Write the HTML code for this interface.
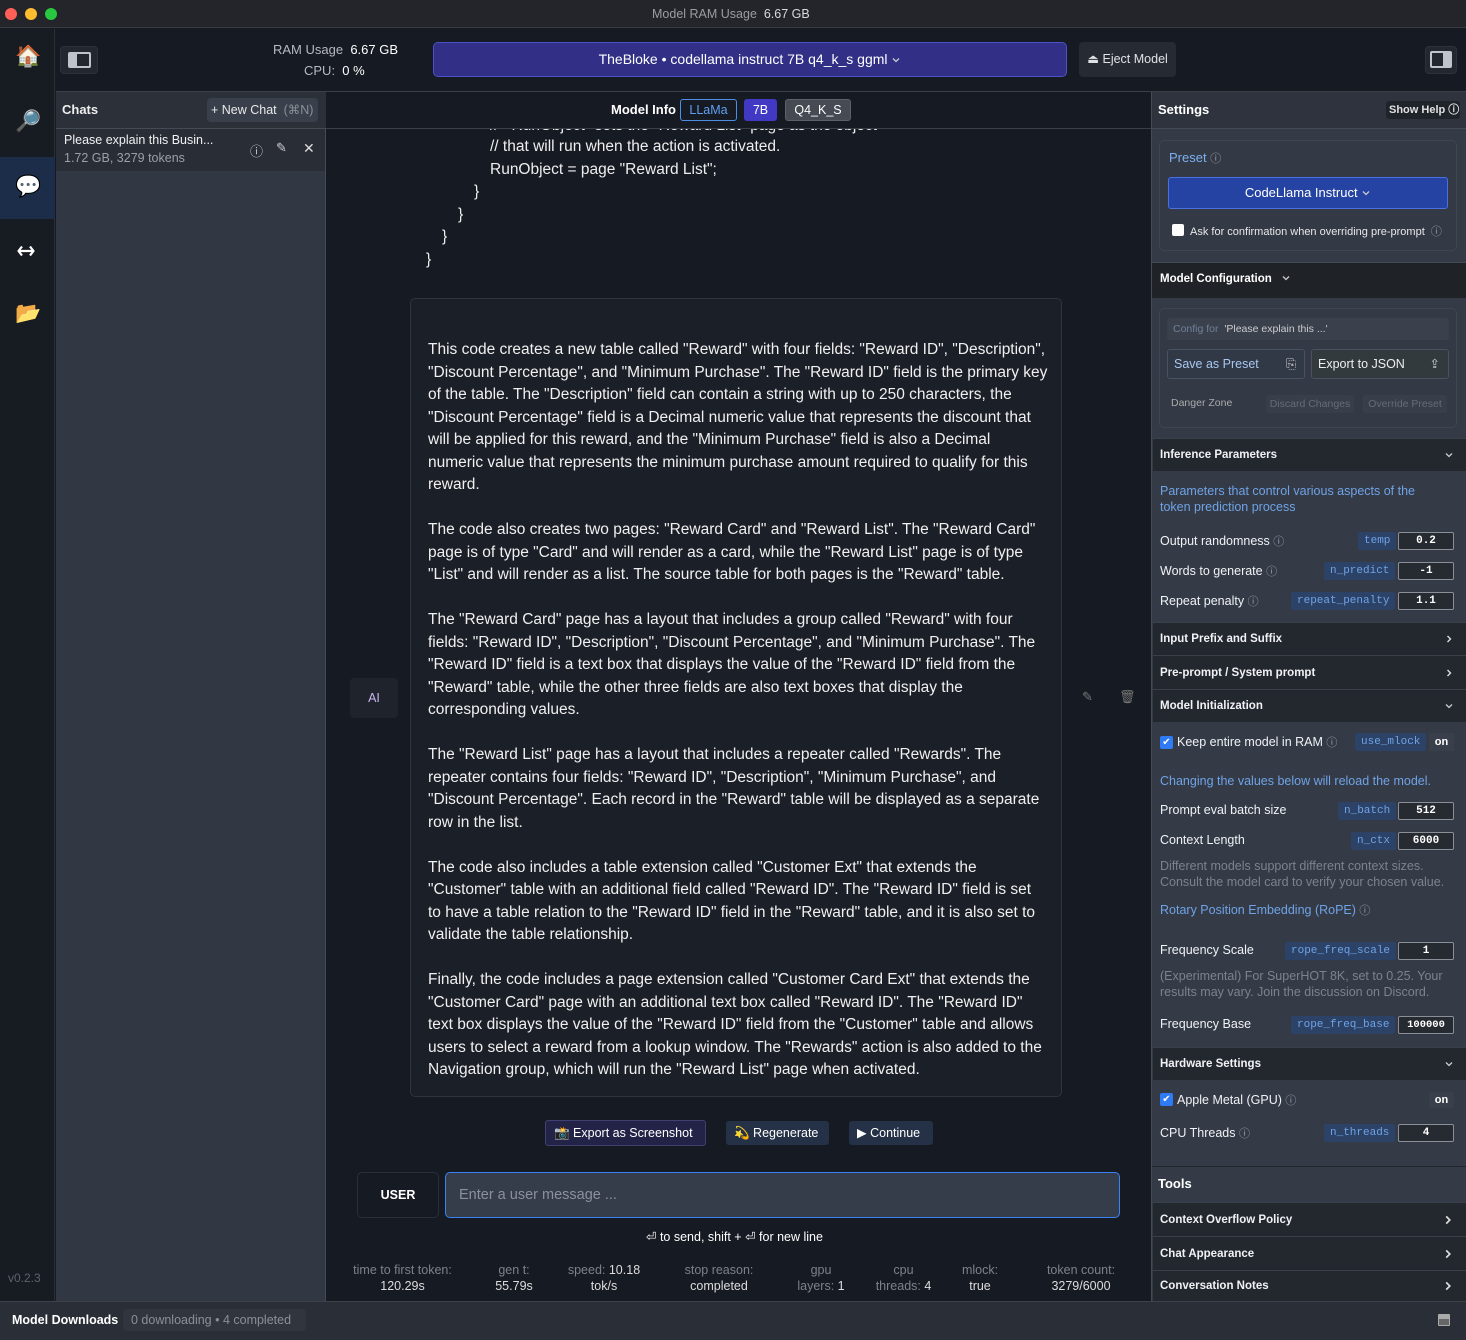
<!DOCTYPE html>
<html><head><meta charset="utf-8"><style>
*{box-sizing:border-box;margin:0;padding:0}
body{width:1466px;height:1340px;background:#161a22;font-family:"Liberation Sans",sans-serif;color:#e6e8ec;position:relative;overflow:hidden;font-size:13px}
.a{position:absolute}
.nw{white-space:nowrap}
.tag{position:absolute;background:#2c4266;color:#6fa3e6;font-family:"Liberation Mono",monospace;font-size:11px;height:18px;line-height:18px;padding:0 6px;border-radius:2px}
.val{position:absolute;border:1px solid #8a8f98;background:#262a31;color:#fff;font-family:"Liberation Mono",monospace;font-size:11px;height:18px;line-height:16px;text-align:center;width:56px;left:1398px;border-radius:2px;font-weight:bold}
.lbl{position:absolute;left:1160px;font-size:12.5px;color:#f0f2f5}
.sec{position:absolute;left:1153px;width:313px;background:#23272e;font-size:11.5px;font-weight:bold;color:#f0f2f5;padding-left:7px;border-top:1px solid #3a404a}
.chev{position:absolute;right:12px;top:50%;margin-top:-5px;width:10px;height:10px}
.info{color:#9aa0aa;font-size:11px}
.msg div{height:22.5px;white-space:nowrap}
</style></head><body>
<svg width="0" height="0" style="position:absolute"><defs>
<symbol id="cd" viewBox="0 0 10 10"><path d="M2 3.5 L5 6.5 L8 3.5" fill="none" stroke="#ccc" stroke-width="1.3"/></symbol>
<symbol id="cr" viewBox="0 0 10 10"><path d="M3.5 2 L6.5 5 L3.5 8" fill="none" stroke="#ddd" stroke-width="1.4"/></symbol>
</defs></svg>
<div class="a" style="left:0;top:0;width:1466px;height:28px;background:#23252a;border-bottom:1px solid #3a3c42"></div>
<div class="a" style="left:5px;top:8px;width:12px;height:12px;border-radius:50%;background:#fe5f57"></div>
<div class="a" style="left:25px;top:8px;width:12px;height:12px;border-radius:50%;background:#febc2e"></div>
<div class="a" style="left:45px;top:8px;width:12px;height:12px;border-radius:50%;background:#28c840"></div>
<div class="a nw" style="left:652px;top:7px;font-size:12.5px;color:#9a9ca2">Model RAM Usage &nbsp;<span style="color:#d8d9dc">6.67 GB</span></div>

<div class="a" style="left:0;top:29px;width:55px;height:1272px;background:#171b22;border-right:1px solid #2a2f38"></div>
<div class="a" style="left:0;top:157px;width:55px;height:62px;background:#1c2d4a"></div>
<div class="a" style="left:15px;top:45px;font-size:21px">🏠</div>
<div class="a" style="left:15px;top:110px;font-size:21px">🔎</div>
<div class="a" style="left:15px;top:175px;font-size:21px">💬</div>
<svg class="a" style="left:17px;top:245px" width="18" height="12" viewBox="0 0 18 12"><path d="M5 1.5 L1.5 6 L5 10.5 M13 1.5 L16.5 6 L13 10.5 M2 6 H16" fill="none" stroke="#fff" stroke-width="2.2" stroke-linejoin="round"/></svg>
<div class="a" style="left:15px;top:302px;font-size:21px">📂</div>
<div class="a" style="left:8px;top:1271px;font-size:12px;color:#5d626b">v0.2.3</div>

<div class="a" style="left:56px;top:91px;width:1410px;height:1px;background:#3a3f48"></div>
<div class="a" style="left:60px;top:46px;width:38px;height:28px;border-radius:4px;background:#232830;border:1px solid #2d323a"></div>
<div class="a" style="left:68px;top:52px;width:23px;height:16px;border:2px solid #bfc3ca;border-radius:2px"><div style="width:7px;height:12px;background:#bfc3ca"></div></div>
<div class="a nw" style="left:273px;top:42px;font-size:13px;color:#b6b9bf">RAM Usage &nbsp;<span style="color:#fff">6.67 GB</span></div>
<div class="a nw" style="left:304px;top:63px;font-size:13px;color:#b6b9bf">CPU: &nbsp;<span style="color:#fff">0 %</span></div>
<div class="a nw" style="left:433px;top:42px;width:634px;height:35px;background:#312f86;border:1px solid #4b52c9;border-radius:5px;text-align:center;line-height:33px;font-size:14px;color:#fff">TheBloke • codellama instruct 7B q4_k_s ggml <svg width="10" height="10" style="vertical-align:-1px"><use href="#cd"/></svg></div>
<div class="a" style="left:1079px;top:42px;width:97px;height:35px;background:#262a32;border-radius:4px;text-align:center;line-height:35px;font-size:12.5px;color:#e0e2e6">⏏ Eject Model</div>
<div class="a" style="left:1425px;top:46px;width:32px;height:28px;border-radius:4px;background:#232830;border:1px solid #2d323a"></div>
<div class="a" style="left:1430px;top:51px;width:22px;height:17px;border:2px solid #bfc3ca;border-radius:2px"><div style="margin-left:11px;width:7px;height:13px;background:#bfc3ca"></div></div>

<div class="a" style="left:56px;top:92px;width:270px;height:1209px;background:#323843;border-right:1px solid #454b55"></div>
<div class="a" style="left:56px;top:92px;width:270px;height:37px;background:#2b3039;border-bottom:1px solid #454b55"></div>
<div class="a" style="left:62px;top:102px;font-size:13px;font-weight:bold;color:#eee">Chats</div>
<div class="a nw" style="left:207px;top:98px;width:111px;height:24px;background:#3a404b;border-radius:4px;font-size:12.5px;line-height:24px;padding-left:4px;color:#e8e8e8">+ New Chat &nbsp;<span style="color:#8a8f98">(⌘N)</span></div>
<div class="a" style="left:56px;top:129px;width:269px;height:42px;background:#282d36"></div>
<div class="a nw" style="left:64px;top:133px;font-size:12.5px;color:#f2f2f2">Please explain this Busin...</div>
<div class="a nw" style="left:64px;top:151px;font-size:12.5px;color:#9aa0a8">1.72 GB, 3279 tokens</div>
<div class="a" style="left:250px;top:141px;font-size:13px;color:#ccc">ⓘ</div>
<div class="a" style="left:276px;top:140px;font-size:13px;color:#ccc">✎</div>
<div class="a" style="left:303px;top:140px;font-size:14px;color:#ddd">✕</div>

<div class="a" style="left:326px;top:128px;width:825px;height:1px;background:#3a3f48"></div>
<div class="a" style="left:611px;top:102px;font-size:13px;font-weight:bold;color:#fff">Model Info</div>
<div class="a" style="left:680px;top:99px;width:57px;height:22px;border:1px solid #4d8ee6;border-radius:3px;color:#5fa0f0;font-size:12.5px;text-align:center;line-height:20px">LLaMa</div>
<div class="a" style="left:744px;top:99px;width:33px;height:22px;background:#4138c4;border-radius:3px;color:#fff;font-size:12.5px;text-align:center;line-height:22px">7B</div>
<div class="a" style="left:785px;top:99px;width:66px;height:22px;background:#454a53;border:1px solid #5b606a;border-radius:3px;color:#fff;font-size:12.5px;text-align:center;line-height:20px">Q4_K_S</div>

<div class="a" style="left:326px;top:129px;width:825px;height:170px;overflow:hidden;font-size:15.5px;color:#eee">
<div class="a nw" style="left:164px;top:-12px">//&nbsp;&nbsp;&nbsp;RunObject" sets the "Reward List" page as the object</div>
<div class="a nw" style="left:164px;top:9px">// that will run when the action is activated.</div>
<div class="a nw" style="left:164px;top:32px">RunObject = page "Reward List";</div>
<div class="a" style="left:148px;top:54px">}</div>
<div class="a" style="left:132px;top:77px">}</div>
<div class="a" style="left:116px;top:99px">}</div>
<div class="a" style="left:100px;top:122px">}</div>
</div>

<div class="a" style="left:410px;top:298px;width:652px;height:799px;background:#1b1f27;border:1px solid #2f343d;border-radius:5px"></div>
<div class="a" style="left:350px;top:678px;width:48px;height:40px;background:#1f232b;border-radius:4px;color:#c9b6f0;font-size:12.5px;text-align:center;line-height:40px">AI</div>
<div class="a" style="left:1082px;top:689px;font-size:13px;color:#777">✎</div>
<div class="a" style="left:1119px;top:689px;font-size:13px;color:#777">🗑</div>
<div class="a msg" style="left:428px;top:339px;font-size:15.5px;line-height:22.5px;color:#f0f0f0">
<div>This code creates a new table called "Reward" with four fields: "Reward ID", "Description",</div>
<div>"Discount Percentage", and "Minimum Purchase". The "Reward ID" field is the primary key</div>
<div>of the table. The "Description" field can contain a string with up to 250 characters, the</div>
<div>"Discount Percentage" field is a Decimal numeric value that represents the discount that</div>
<div>will be applied for this reward, and the "Minimum Purchase" field is also a Decimal</div>
<div>numeric value that represents the minimum purchase amount required to qualify for this</div>
<div>reward.</div>
<div></div>
<div>The code also creates two pages: "Reward Card" and "Reward List". The "Reward Card"</div>
<div>page is of type "Card" and will render as a card, while the "Reward List" page is of type</div>
<div>"List" and will render as a list. The source table for both pages is the "Reward" table.</div>
<div></div>
<div>The "Reward Card" page has a layout that includes a group called "Reward" with four</div>
<div>fields: "Reward ID", "Description", "Discount Percentage", and "Minimum Purchase". The</div>
<div>"Reward ID" field is a text box that displays the value of the "Reward ID" field from the</div>
<div>"Reward" table, while the other three fields are also text boxes that display the</div>
<div>corresponding values.</div>
<div></div>
<div>The "Reward List" page has a layout that includes a repeater called "Rewards". The</div>
<div>repeater contains four fields: "Reward ID", "Description", "Minimum Purchase", and</div>
<div>"Discount Percentage". Each record in the "Reward" table will be displayed as a separate</div>
<div>row in the list.</div>
<div></div>
<div>The code also includes a table extension called "Customer Ext" that extends the</div>
<div>"Customer" table with an additional field called "Reward ID". The "Reward ID" field is set</div>
<div>to have a table relation to the "Reward ID" field in the "Reward" table, and it is also set to</div>
<div>validate the table relationship.</div>
<div></div>
<div>Finally, the code includes a page extension called "Customer Card Ext" that extends the</div>
<div>"Customer Card" page with an additional text box called "Reward ID". The "Reward ID"</div>
<div>text box displays the value of the "Reward ID" field from the "Customer" table and allows</div>
<div>users to select a reward from a lookup window. The "Rewards" action is also added to the</div>
<div>Navigation group, which will run the "Reward List" page when activated.</div>
</div>

<div class="a nw" style="left:545px;top:1120px;width:161px;height:26px;background:#232348;border:1px solid #3f4270;border-radius:3px;font-size:12.5px;line-height:24px;padding-left:8px;color:#fff">📸 Export as Screenshot</div>
<div class="a nw" style="left:726px;top:1121px;width:103px;height:24px;background:#253146;border-radius:3px;font-size:12.5px;line-height:24px;padding-left:8px;color:#fff">💫 Regenerate</div>
<div class="a nw" style="left:849px;top:1121px;width:84px;height:24px;background:#253146;border-radius:3px;font-size:12.5px;line-height:24px;padding-left:8px;color:#fff">▶ Continue</div>

<div class="a" style="left:357px;top:1172px;width:82px;height:46px;background:#161a22;border:1px solid #2a2f38;border-radius:5px;text-align:center;line-height:44px;font-size:12.5px;font-weight:bold;color:#fff">USER</div>
<div class="a" style="left:445px;top:1172px;width:675px;height:46px;background:#353d4a;border:1px solid #3b82f6;border-radius:5px;line-height:44px;padding-left:13px;font-size:14.5px;color:#8a919c">Enter a user message ...</div>
<div class="a nw" style="left:646px;top:1229px;font-size:12.5px;color:#fff">⏎ to send, shift + ⏎ for new line</div>

<div class="a" style="left:326px;top:1262px;width:825px;font-size:12.5px;color:#7c828c;line-height:16px">
<div class="a nw" style="left:25px;text-align:center;width:103px">time to first token:<br><span style="color:#ddd">120.29s</span></div>
<div class="a nw" style="left:160px;text-align:center;width:56px">gen t:<br><span style="color:#ddd">55.79s</span></div>
<div class="a nw" style="left:240px;text-align:center;width:76px">speed: <span style="color:#ddd">10.18<br>tok/s</span></div>
<div class="a nw" style="left:350px;text-align:center;width:86px">stop reason:<br><span style="color:#ddd">completed</span></div>
<div class="a nw" style="left:465px;text-align:center;width:60px">gpu<br>layers: <span style="color:#ddd">1</span></div>
<div class="a nw" style="left:540px;text-align:center;width:75px">cpu<br>threads: <span style="color:#ddd">4</span></div>
<div class="a nw" style="left:627px;text-align:center;width:54px">mlock:<br><span style="color:#ddd">true</span></div>
<div class="a nw" style="left:710px;text-align:center;width:90px">token count:<br><span style="color:#ddd">3279/6000</span></div>
</div>

<div class="a" style="left:1151px;top:92px;width:315px;height:1209px;background:#343a46;border-left:1px solid #454b55"></div>
<div class="a" style="left:1152px;top:92px;width:314px;height:37px;background:#2e333d;border-bottom:1px solid #454b55"></div>
<div class="a" style="left:1158px;top:102px;font-size:13px;font-weight:bold;color:#fff">Settings</div>
<div class="a nw" style="left:1386px;top:101px;width:74px;height:18px;background:#1f232a;border-radius:3px;font-size:11px;line-height:18px;padding-left:3px;color:#e0e0e0;font-weight:bold">Show Help ⓘ</div>

<div class="a" style="left:1159px;top:140px;width:298px;height:111px;border:1px solid #40464f;border-radius:5px;background:#333945"></div>
<div class="a" style="left:1169px;top:150px;font-size:13px;color:#7eb0f0">Preset <span class="info">ⓘ</span></div>
<div class="a nw" style="left:1168px;top:177px;width:280px;height:32px;background:#2443a2;border:1px solid #4a70e0;border-radius:3px;text-align:center;line-height:30px;font-size:13px;color:#fff">CodeLlama Instruct <svg width="10" height="10" style="vertical-align:-1px"><use href="#cd"/></svg></div>
<div class="a" style="left:1172px;top:224px;width:12px;height:12px;background:#fff;border-radius:2px"></div>
<div class="a nw" style="left:1190px;top:223px;font-size:11px;color:#e8e8e8">Ask for confirmation when overriding pre-prompt &nbsp;<span class="info">ⓘ</span></div>

<div class="a" style="left:1152px;top:262px;width:314px;height:36px;background:#1f2227;border-top:1px solid #454b55"></div>
<div class="a nw" style="left:1160px;top:273px;font-size:11.5px;font-weight:bold;color:#fff">Model Configuration &nbsp;&nbsp;<svg width="10" height="10" style="vertical-align:-1px"><use href="#cd"/></svg></div>

<div class="a" style="left:1159px;top:308px;width:298px;height:120px;border:1px solid #40464f;border-radius:5px;background:#333945"></div>
<div class="a" style="left:1167px;top:318px;width:282px;height:22px;background:#3a414d;border-radius:3px"></div>
<div class="a nw" style="left:1173px;top:323px;font-size:10.5px;color:#6e8098">Config for &nbsp;<span style="color:#ccc">'Please explain this ...'</span></div>
<div class="a" style="left:1167px;top:349px;width:138px;height:30px;border:1px solid #4a5160;border-radius:3px;background:#313846;line-height:28px;padding-left:6px;font-size:12.5px;color:#a8c8f0">Save as Preset<span style="position:absolute;right:8px;color:#ccc">⎘</span></div>
<div class="a" style="left:1311px;top:349px;width:138px;height:30px;border:1px solid #4a5160;border-radius:3px;background:#323a3e;line-height:28px;padding-left:6px;font-size:12.5px;color:#eee">Export to JSON<span style="position:absolute;right:8px;color:#ccc">⇪</span></div>
<div class="a nw" style="left:1171px;top:397px;font-size:10.5px;color:#aaa">Danger Zone</div>
<div class="a nw" style="left:1266px;top:395px;width:88px;height:18px;background:#383e4a;border-radius:3px;font-size:10.5px;line-height:18px;text-align:center;color:#666c77">Discard Changes</div>
<div class="a nw" style="left:1363px;top:395px;width:84px;height:18px;background:#383e4a;border-radius:3px;font-size:10.5px;line-height:18px;text-align:center;color:#666c77">Override Preset</div>

<div class="sec" style="top:438px;height:33px;line-height:33px">Inference Parameters<svg class="chev"><use href="#cd"/></svg></div>
<div class="a" style="left:1160px;top:483px;font-size:12.5px;line-height:16px;color:#6fa3e6">Parameters that control various aspects of the<br>token prediction process</div>
<div class="lbl" style="top:533px">Output randomness <span class="info">ⓘ</span></div>
<div class="tag" style="left:1358px;top:532px">temp</div><div class="val" style="top:532px">0.2</div>
<div class="lbl" style="top:563px">Words to generate <span class="info">ⓘ</span></div>
<div class="tag" style="left:1324px;top:562px">n_predict</div><div class="val" style="top:562px">-1</div>
<div class="lbl" style="top:593px">Repeat penalty <span class="info">ⓘ</span></div>
<div class="tag" style="left:1291px;top:592px">repeat_penalty</div><div class="val" style="top:592px">1.1</div>

<div class="sec" style="top:622px;height:33px;line-height:33px">Input Prefix and Suffix<svg class="chev"><use href="#cr"/></svg></div>
<div class="sec" style="top:655px;height:34px;line-height:34px">Pre-prompt / System prompt<svg class="chev"><use href="#cr"/></svg></div>
<div class="sec" style="top:689px;height:33px;line-height:33px">Model Initialization<svg class="chev"><use href="#cd"/></svg></div>

<div class="a" style="left:1160px;top:736px;width:13px;height:13px;background:#2f7af5;border-radius:2px;color:#fff;font-size:10px;line-height:13px;text-align:center">✔</div>
<div class="lbl" style="left:1177px;top:734px">Keep entire model in RAM <span class="info">ⓘ</span></div>
<div class="tag" style="left:1355px;top:733px">use_mlock</div>
<div class="a" style="left:1429px;top:733px;width:25px;height:18px;background:#3a404b;font-size:11px;line-height:18px;text-align:center;color:#fff;font-weight:bold">on</div>
<div class="a nw" style="left:1160px;top:774px;font-size:12.5px;color:#6fa3e6">Changing the values below will reload the model.</div>
<div class="lbl" style="top:803px">Prompt eval batch size</div>
<div class="tag" style="left:1338px;top:802px">n_batch</div><div class="val" style="top:802px">512</div>
<div class="lbl" style="top:833px">Context Length</div>
<div class="tag" style="left:1351px;top:832px">n_ctx</div><div class="val" style="top:832px">6000</div>
<div class="a" style="left:1160px;top:858px;font-size:12.5px;line-height:16px;color:#7d838d">Different models support different context sizes.<br>Consult the model card to verify your chosen value.</div>
<div class="a nw" style="left:1160px;top:902px;font-size:12.5px;color:#6fa3e6">Rotary Position Embedding (RoPE) <span class="info">ⓘ</span></div>
<div class="lbl" style="top:943px">Frequency Scale</div>
<div class="tag" style="left:1285px;top:942px">rope_freq_scale</div><div class="val" style="top:942px">1</div>
<div class="a" style="left:1160px;top:968px;font-size:12.5px;line-height:16px;color:#7d838d">(Experimental) For SuperHOT 8K, set to 0.25. Your<br>results may vary. Join the discussion on Discord.</div>
<div class="lbl" style="top:1017px">Frequency Base</div>
<div class="tag" style="left:1291px;top:1016px">rope_freq_base</div><div class="val" style="top:1016px;font-size:10.5px">100000</div>

<div class="sec" style="top:1047px;height:33px;line-height:33px">Hardware Settings<svg class="chev"><use href="#cd"/></svg></div>
<div class="a" style="left:1160px;top:1093px;width:13px;height:13px;background:#2f7af5;border-radius:2px;color:#fff;font-size:10px;line-height:13px;text-align:center">✔</div>
<div class="lbl" style="left:1177px;top:1092px">Apple Metal (GPU) <span class="info">ⓘ</span></div>
<div class="a" style="left:1429px;top:1092px;width:25px;height:16px;background:#3a404b;font-size:11px;line-height:16px;text-align:center;color:#fff;font-weight:bold;border-radius:2px">on</div>
<div class="lbl" style="top:1125px">CPU Threads <span class="info">ⓘ</span></div>
<div class="tag" style="left:1324px;top:1124px">n_threads</div><div class="val" style="top:1124px">4</div>

<div class="a" style="left:1152px;top:1166px;width:314px;height:1px;background:#22252b"></div>
<div class="a" style="left:1158px;top:1176px;font-size:13px;font-weight:bold;color:#fff">Tools</div>
<div class="sec" style="top:1202px;height:34px;line-height:34px">Context Overflow Policy<svg class="chev" style="width:12px;height:12px;margin-top:-6px" viewBox="0 0 10 10"><use href="#cr"/></svg></div>
<div class="sec" style="top:1236px;height:34px;line-height:34px">Chat Appearance<svg class="chev" style="width:12px;height:12px;margin-top:-6px" viewBox="0 0 10 10"><use href="#cr"/></svg></div>
<div class="sec" style="top:1270px;height:31px;line-height:31px">Conversation Notes<svg class="chev" style="width:12px;height:12px;margin-top:-6px" viewBox="0 0 10 10"><use href="#cr"/></svg></div>

<div class="a" style="left:0;top:1301px;width:1466px;height:39px;background:#2a2e36;border-top:1px solid #3c414a"></div>
<div class="a nw" style="left:12px;top:1313px;font-size:12.5px;font-weight:bold;color:#fff">Model Downloads</div>
<div class="a nw" style="left:123px;top:1309px;width:183px;height:22px;background:#30353e;border-radius:4px;font-size:12.5px;line-height:22px;padding-left:8px;color:#8a9099">0 downloading • 4 completed</div>
<div class="a" style="left:1438px;top:1314px;width:12px;height:12px;border:1px solid #aaa;border-radius:1px;background:linear-gradient(#aaa 0 40%,#666 40%)"></div>
</body></html>
